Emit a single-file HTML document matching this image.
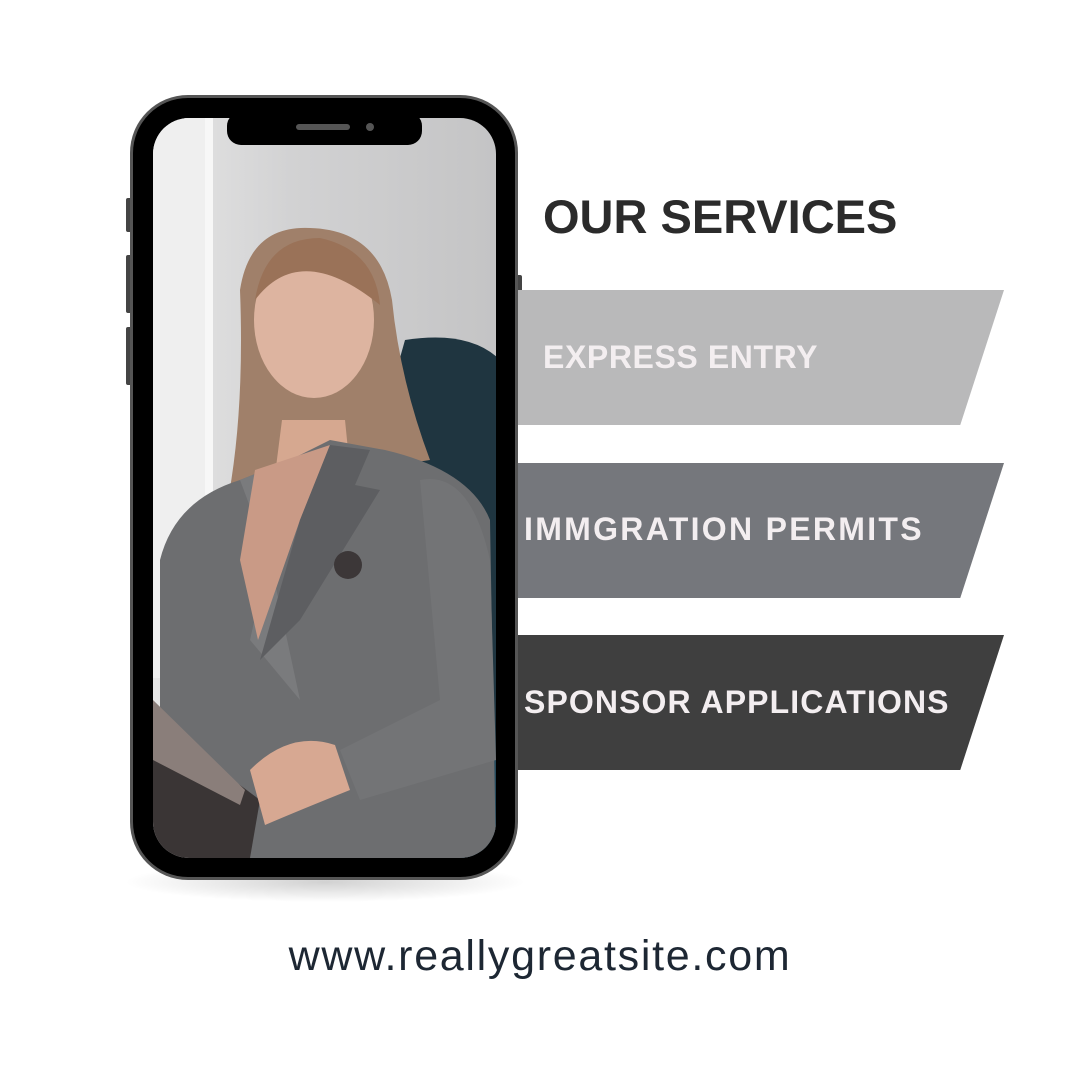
<!DOCTYPE html>
<html><head><style>
html,body{margin:0;padding:0;background:#fff;width:1080px;height:1080px;overflow:hidden;position:relative;font-family:"Liberation Sans",sans-serif}
.t{position:absolute;left:543px;top:189px;font-size:47px;font-weight:bold;color:#2b2b2b}
.b{position:absolute;left:518px;width:486px;height:135px;clip-path:polygon(0 0,100% 0,91% 100%,0 100%)}
.bt{position:absolute;font-weight:bold;font-size:32px;color:#f3eef0;white-space:nowrap}
.url{position:absolute;left:0;width:1080px;top:932px;text-align:center;font-size:43px;color:#1d2733;letter-spacing:1.7px}
</style></head><body>
<svg width="1080" height="1080" style="position:absolute;left:0;top:0">
<defs>
<clipPath id="sc"><rect x="153" y="118" width="343" height="740" rx="36"/></clipPath>
<radialGradient id="sh" cx="0.5" cy="0.5" r="0.5"><stop offset="0" stop-color="#000" stop-opacity="0.18"/><stop offset="1" stop-color="#000" stop-opacity="0"/></radialGradient>
<linearGradient id="bg" x1="0" x2="1"><stop offset="0" stop-color="#e6e6e6"/><stop offset="0.4" stop-color="#d2d2d3"/><stop offset="1" stop-color="#c4c4c5"/></linearGradient>
</defs>
<ellipse cx="325" cy="882" rx="200" ry="20" fill="url(#sh)"/>
<rect x="126" y="198" width="6" height="34" rx="2" fill="#444"/>
<rect x="126" y="255" width="6" height="58" rx="2" fill="#444"/>
<rect x="126" y="327" width="6" height="58" rx="2" fill="#444"/>
<rect x="516" y="275" width="6" height="92" rx="2" fill="#444"/>
<rect x="130" y="95" width="388" height="785" rx="58" fill="#555"/>
<rect x="133" y="98" width="382" height="779" rx="55" fill="#000"/>
<g clip-path="url(#sc)">
<rect x="153" y="118" width="343" height="740" fill="url(#bg)"/>
<rect x="153" y="118" width="55" height="560" fill="#efefef"/>
<rect x="205" y="118" width="8" height="500" fill="#f7f7f7"/>
<path d="M405 340 Q470 330 500 360 L500 858 L350 858 L360 500 Z" fill="#1f3540"/>
<path d="M400 760 L500 760 L500 858 L380 858 Z" fill="#254a5c"/>
<path d="M240 290 Q250 225 310 228 Q380 230 392 300 Q400 380 430 460 L300 480 L225 515 Q245 420 240 290 Z" fill="#a0806a"/>
<ellipse cx="314" cy="320" rx="60" ry="78" fill="#ddb4a0"/>
<path d="M255 300 Q300 240 380 305 Q375 250 320 238 Q265 238 255 300 Z" fill="#9a7258"/>
<path d="M282 420 L345 420 L350 470 L275 475 Z" fill="#d6a890"/>
<path d="M160 560 Q175 500 240 480 L290 460 L330 440 L385 450 Q470 470 490 520 L496 858 L230 858 L200 760 L160 720 Z" fill="#6d6e70"/>
<path d="M240 480 L290 460 L250 640 L300 700 L270 560 Z" fill="#7a7b7d"/>
<path d="M255 470 L330 445 L300 520 L258 640 L240 560 Z" fill="#c99a86"/>
<path d="M330 445 L370 450 L355 485 L380 490 L300 620 L260 660 L300 520 Z" fill="#5d5e61"/>
<path d="M420 480 Q470 470 490 560 L496 760 L360 800 L340 750 L440 700 Z" fill="#737476"/>
<path d="M153 720 L260 800 L250 858 L153 858 Z" fill="#3a3535"/>
<path d="M153 700 L245 790 L240 805 L153 760 Z" fill="#8a7e7a"/>
<path d="M250 770 Q290 730 335 745 L350 790 Q300 810 265 825 Z" fill="#d7a892"/>
<circle cx="348" cy="565" r="14" fill="#3c3738"/>
</g>
<rect x="227" y="112" width="195" height="33" rx="14" fill="#000"/>
<rect x="296" y="124" width="54" height="6" rx="3" fill="#555"/>
<circle cx="370" cy="127" r="4" fill="#555"/>
</svg>
<div class="t">OUR SERVICES</div>
<div class="b" style="top:290px;background:#b9b9ba"></div>
<div class="bt" style="left:543px;top:339px;letter-spacing:0.6px">EXPRESS ENTRY</div>
<div class="b" style="top:463px;background:#75777c"></div>
<div class="bt" style="left:524px;top:511px;letter-spacing:2.3px">IMMGRATION PERMITS</div>
<div class="b" style="top:635px;background:#3f3f3f"></div>
<div class="bt" style="left:524px;top:684px;letter-spacing:1.1px">SPONSOR APPLICATIONS</div>
<div class="url">www.reallygreatsite.com</div>
</body></html>
